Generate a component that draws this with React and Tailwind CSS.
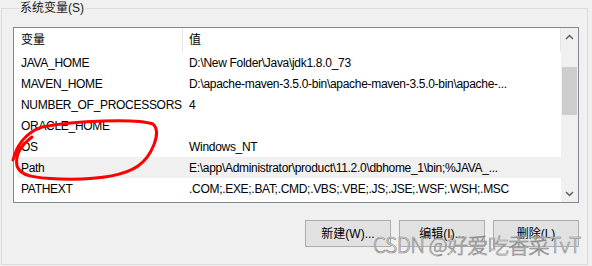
import React from 'react'

const rows = [
  { name: 'JAVA_HOME', value: 'D:\\New Folder\\Java\\jdk1.8.0_73' },
  { name: 'MAVEN_HOME', value: 'D:\\apache-maven-3.5.0-bin\\apache-maven-3.5.0-bin\\apache-...' },
  { name: 'NUMBER_OF_PROCESSORS', value: '4' },
  { name: 'ORACLE_HOME', value: '' },
  { name: 'OS', value: 'Windows_NT' },
  { name: 'Path', value: 'E:\\app\\Administrator\\product\\11.2.0\\dbhome_1\\bin;%JAVA_...', selected: true },
  { name: 'PATHEXT', value: '.COM;.EXE;.BAT;.CMD;.VBS;.VBE;.JS;.JSE;.WSF;.WSH;.MSC' },
]

function Chevron({ up }) {
  return (
    <svg width="9" height="6" viewBox="0 0 9 6">
      <polyline
        points={up ? '1,5 4.5,1.5 8,5' : '1,1 4.5,4.5 8,1'}
        fill="none"
        stroke="#606060"
        strokeWidth="1.5"
      />
    </svg>
  )
}

export default function App() {
  return (
    <div className="relative w-[592px] h-[266px] bg-[#f0f0f0] text-[12px] text-black font-['Liberation_Sans','Noto_Sans_CJK_SC',sans-serif] overflow-hidden">
      <fieldset className="ml-[1px] w-[587px] h-[265px] border border-[#dcdcdc] pl-[11px]">
        <legend className="ml-[6px] px-[1px] leading-[16px] text-[#1a1a1a]">系统变量(S)</legend>

        <div className="mt-[11px] w-[566px] h-[176px] border border-[#828790] bg-white flex">
          <div className="flex-1 pl-[3px]">
            <div className="flex h-[24px] items-center">
              <div className="w-[166px] h-full flex items-center pl-[4px] border-r border-[#e5e5e5]">变量</div>
              <div className="flex-1 h-full flex items-center pl-[6px] border-r border-[#e5e5e5]">值</div>
            </div>
            {rows.map((row) => (
              <div
                key={row.name}
                className={`flex h-[21px] items-center whitespace-nowrap tracking-[-0.3px] ${row.selected ? 'bg-[#f0f0f0]' : ''}`}
              >
                <div className="w-[166px] pl-[4px]">{row.name}</div>
                <div className="flex-1 pl-[6px] overflow-hidden">{row.value}</div>
              </div>
            ))}
          </div>

          <div className="w-[17px] bg-[#f0f0f0] flex flex-col">
            <div className="h-[17px] flex items-center justify-center">
              <Chevron up />
            </div>
            <div className="flex-1 pt-[22px]">
              <div className="mx-[1px] h-[48px] bg-[#cdcdcd]" />
            </div>
            <div className="h-[17px] flex items-center justify-center">
              <Chevron />
            </div>
          </div>
        </div>

        <div className="w-[566px] mt-[17px] flex justify-end gap-[8px]">
          <button className="w-[86px] h-[27px] bg-[#e1e1e1] border border-[#adadad]">新建(W)...</button>
          <button className="w-[86px] h-[27px] bg-[#e1e1e1] border border-[#adadad]">编辑(I)...</button>
          <button className="w-[86px] h-[27px] bg-[#e1e1e1] border border-[#adadad]">删除(L)</button>
        </div>
      </fieldset>

      <svg className="absolute inset-0 pointer-events-none" width="592" height="266" viewBox="0 0 592 266">
        <path
          d="M13 160 C16 148 24 133 42 127 C75 121 135 118 153 124 C162 132 152 156 138 166 C122 177 95 180 60 179 C34 178 20 176 17 166 C15 156 20 146 32 137"
          fill="none"
          stroke="#ff0000"
          strokeWidth="3"
          strokeLinecap="round"
        />
      </svg>

      <div className="absolute left-[373px] top-[230px] text-[21px] leading-[28px] text-white/85 tracking-[-0.6px] [-webkit-text-stroke:0.7px_#8c8c8c] font-['Noto_Sans_CJK_SC',sans-serif] font-light whitespace-nowrap pointer-events-none">
        CSDN @好爱吃香菜TvT
      </div>
    </div>
  )
}
